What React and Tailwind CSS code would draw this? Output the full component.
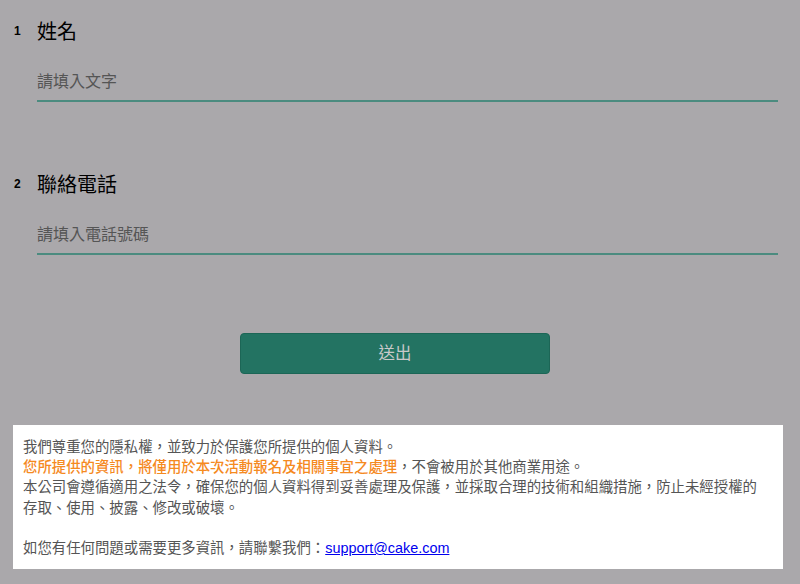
import React from "react";

const font = "font-['Liberation_Sans','Noto_Sans_CJK_TC',sans-serif]";

function Field({ num, title, placeholder }) {
  return (
    <div className="flex">
      <div className="w-[24px] shrink-0 pl-[1px] pt-[4px] text-[12px] font-bold leading-[14px] text-black">
        {num}
      </div>
      <div className="flex-1">
        <h3 className="text-[20px] leading-[24px] text-black">{title}</h3>
        <div className="mt-[26px] border-b-2 border-[#4b8b7f] pb-[6px]">
          <input
            type="text"
            placeholder={placeholder}
            className="w-full bg-transparent text-[16px] leading-[24px] text-[#444] outline-none placeholder:text-[#555]"
          />
        </div>
      </div>
    </div>
  );
}

export default function App() {
  return (
    <div className={`h-[584px] overflow-hidden bg-[#aaa8ab] ${font}`}>
      <form className="pl-[13px] pr-[22px] pt-[20px]">
        <Field num="1" title="姓名" placeholder="請填入文字" />
        <div className="mt-[71px]">
          <Field num="2" title="聯絡電話" placeholder="請填入電話號碼" />
        </div>

        <div className="mt-[78px] pl-[227px]">
          <button
            type="button"
            className="h-[41px] w-[310px] rounded-[4px] border border-[#1c6656] bg-[#237362] text-[16.5px] text-[#c9c9c9]"
          >
            送出
          </button>
        </div>
      </form>

      {/* privacy notice */}
      <div className="mx-[13px] mt-[51px] w-[770px] bg-white pl-[10px] pr-[18px] pt-[12px] pb-[11px] text-[14.4px] leading-[20.2px] text-[#555]">
        <p>我們尊重您的隱私權，並致力於保護您所提供的個人資料。</p>
        <p>
          <span className="font-medium text-[#f58a1f]">您所提供的資訊，將僅用於本次活動報名及相關事宜之處理</span>
          ，不會被用於其他商業用途。
        </p>
        <p>
          本公司會遵循適用之法令，確保您的個人資料得到妥善處理及保護，並採取合理的技術和組織措施，防止未經授權的存取、使用、披露、修改或破壞。
        </p>
        <p className="mt-[20.2px]">
          如您有任何問題或需要更多資訊，請聯繫我們：
          <a href="#" className="text-[#0000ee] underline">
            support@cake.com
          </a>
        </p>
      </div>
    </div>
  );
}
